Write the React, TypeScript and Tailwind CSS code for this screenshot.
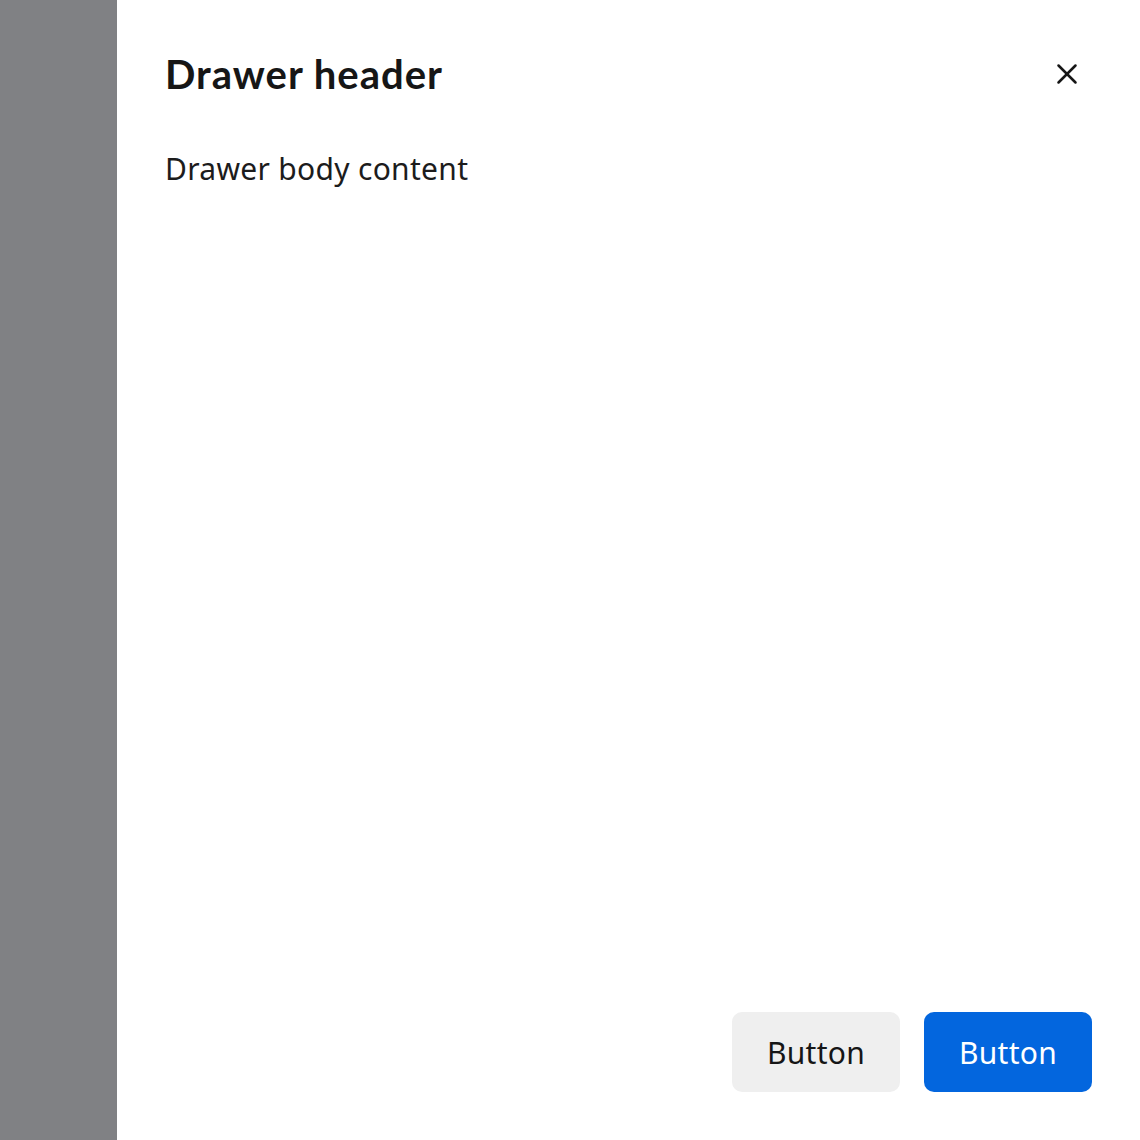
import { X } from 'lucide-react';

export default function App() {
  return (
    <div className="flex h-[1140px] w-[1140px] bg-[#808184]" style={{ fontFamily: '"Noto Sans", Lato, sans-serif' }}>
      <div className="w-[117px] shrink-0" />
      <div className="flex flex-1 flex-col bg-white px-12 pb-12">
        <div className="flex items-center justify-between pt-[52px]">
          <h2 className="text-[40px] font-bold leading-[44px] tracking-[1px] text-[#161616]" style={{ fontFamily: 'Lato, "Noto Sans", sans-serif' }}>
            Drawer header
          </h2>
          <button className="mr-[5px] flex h-10 w-10 items-center justify-center text-[#161616]">
            <X className="h-[34px] w-[34px] shrink-0" strokeWidth={1.8} />
          </button>
        </div>
        <p className="mt-[54px] text-[30px] leading-[38px] tracking-[0.3px] text-[#1c1c1c]">Drawer body content</p>
        <div className="flex-1" />
        <div className="flex justify-end gap-6">
          <button className="h-[80px] w-[168px] rounded-[10px] bg-[#efefef] text-[30px] tracking-[0.3px] text-[#161616]">Button</button>
          <button className="h-[80px] w-[168px] rounded-[10px] bg-[#0366de] text-[30px] tracking-[0.3px] text-white">Button</button>
        </div>
      </div>
    </div>
  );
}
